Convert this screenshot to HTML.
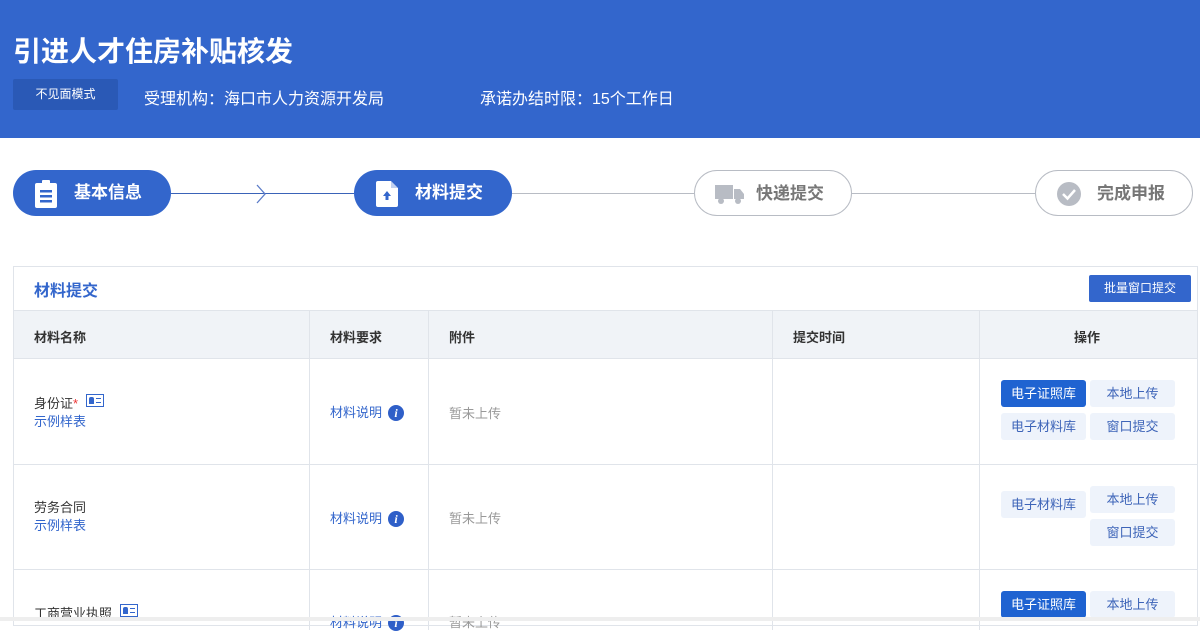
<!DOCTYPE html>
<html><head><meta charset="utf-8"><style>
*{margin:0;padding:0;box-sizing:border-box}
body{width:1200px;height:621px;overflow:hidden;background:#fff;font-family:"Liberation Sans","Noto Sans CJK SC",sans-serif;position:relative}
.hd{position:absolute;left:0;top:0;width:1200px;height:138px;background:#3366cc}
.hd h1{position:absolute;left:13px;top:30px;font-size:28px;color:#fff;font-weight:bold}
.badge{position:absolute;left:13px;top:79px;width:105px;height:31px;background:#2a59b6;color:#fff;font-size:12px;line-height:31px;text-align:center;border-radius:2px}
.hd .t{position:absolute;top:85px;font-size:16px;color:#fff}
.pill{position:absolute;top:170px;height:46px;width:158px;border-radius:23px;font-size:17px;font-weight:bold;line-height:46px}
.on{background:#3366cc;color:#fff}
.off{background:#fff;border:1px solid #b8bcc4;color:#777}
.pill span{position:absolute;left:61px}
.pill svg{position:absolute;left:20px;top:10px}
.ln{position:absolute;top:193px;height:1px}
.box{position:absolute;left:13px;top:266px;width:1185px;height:360px;border:1px solid #e0e4ea}
.ttl{position:absolute;left:20px;top:10px;font-size:16px;color:#3366cc;font-weight:bold}
.bb{position:absolute;right:6px;top:8px;width:102px;height:27px;background:#3366cc;color:#fff;font-size:12px;line-height:27px;text-align:center;border-radius:2px}
.th{position:absolute;left:0;top:43px;width:1183px;height:49px;background:#f0f3f7;border-top:1px solid #e0e4ea;border-bottom:1px solid #e0e4ea}
.c{position:absolute;font-size:13px}
.vl{position:absolute;top:43px;width:1px;height:320px;background:#e0e4ea}
.hl{position:absolute;left:0;width:1183px;height:1px;background:#e0e4ea}
.blue{color:#3366cc}
.btn{position:absolute;width:85px;height:27px;font-size:13px;line-height:27px;text-align:center;border-radius:3px;background:#eef3fb;color:#3d64b8}
.btn.p{background:#1f63d1;color:#fff}
.info{display:inline-block;width:16px;height:16px;border-radius:8px;background:#2f5fc8;color:#fff;font-size:12px;font-weight:bold;line-height:16px;text-align:center;font-family:"Liberation Serif",serif;font-style:italic;vertical-align:0px;margin-left:6px}
.idc{display:inline-block;width:18px;height:13px;border:1px solid #3366cc;vertical-align:1px;margin-left:8px;position:relative}
.idc:before{content:"";position:absolute;left:2px;top:2px;width:5px;height:7px;border-radius:2px 2px 0 0;background:#3366cc}
.idc:after{content:"";position:absolute;left:9px;top:3px;width:5px;height:3px;border-top:1px solid #3366cc;border-bottom:1px solid #3366cc}
.gray{color:#999}
</style></head><body>
<div class="hd">
<h1>引进人才住房补贴核发</h1>
<div class="badge">不见面模式</div>
<div class="t" style="left:144px">受理机构：海口市人力资源开发局</div>
<div class="t" style="left:480px">承诺办结时限：15个工作日</div>
</div>

<div class="ln" style="left:171px;width:183px;background:#3a63b8"></div>
<svg style="position:absolute;left:255px;top:184px" width="12" height="20"><path d="M2 1 L10 10 L2 19" fill="none" stroke="#5a7bc8" stroke-width="1.3"/></svg>
<div class="ln" style="left:511px;width:183px;background:#b8bcc4"></div>
<div class="ln" style="left:851px;width:184px;background:#b8bcc4"></div>

<div class="pill on" style="left:13px"><svg width="26" height="28"><rect x="2" y="3" width="22" height="25" rx="2" fill="#fff"/><rect x="9" y="0" width="8" height="5" rx="1" fill="#fff"/><rect x="7" y="10" width="12" height="2.5" fill="#3366cc"/><rect x="7" y="15" width="12" height="2.5" fill="#3366cc"/><rect x="7" y="20" width="12" height="2.5" fill="#3366cc"/></svg><span>基本信息</span></div>
<div class="pill on" style="left:354px"><svg width="26" height="28"><path d="M2 3 Q2 1 4 1 H17 L24 8 V25 Q24 27 22 27 H4 Q2 27 2 25 Z" fill="#fff"/><path d="M17 1 V8 H24" fill="#3366cc" opacity=".3"/><path d="M13 11 L17 16 H14.5 V20 H11.5 V16 H9 Z" fill="#3366cc"/></svg><span>材料提交</span></div>
<div class="pill off" style="left:694px"><svg width="30" height="26"><rect x="0" y="4" width="18" height="14" fill="#b8bcc4"/><path d="M19 8 H25 L29 13 V18 H19 Z" fill="#b8bcc4"/><circle cx="6" cy="20" r="3" fill="#b8bcc4"/><circle cx="23" cy="20" r="3" fill="#b8bcc4"/></svg><span>快递提交</span></div>
<div class="pill off" style="left:1035px"><svg width="26" height="26"><circle cx="13" cy="13" r="12" fill="#b8bcc4"/><path d="M7 13 L11.5 17.5 L19 9" fill="none" stroke="#fff" stroke-width="2.5"/></svg><span>完成申报</span></div>

<div class="box">
<div class="ttl">材料提交</div>
<div class="bb">批量窗口提交</div>
<div class="th"></div>
<div class="vl" style="left:295px"></div>
<div class="vl" style="left:414px"></div>
<div class="vl" style="left:758px"></div>
<div class="vl" style="left:965px"></div>
<div class="hl" style="top:197px"></div>
<div class="hl" style="top:302px"></div>
<div class="c" style="left:20px;top:60px;font-weight:bold;color:#333">材料名称</div>
<div class="c" style="left:316px;top:60px;font-weight:bold;color:#333">材料要求</div>
<div class="c" style="left:435px;top:60px;font-weight:bold;color:#333">附件</div>
<div class="c" style="left:779px;top:60px;font-weight:bold;color:#333">提交时间</div>
<div class="c" style="left:1060px;top:60px;font-weight:bold;color:#333">操作</div>

<div class="c" style="left:20px;top:127px;color:#333;line-height:18px">身份证<span style="color:#e33">*</span><span class="idc"></span><br><span class="blue">示例样表</span></div>
<div class="c blue" style="left:316px;top:135px">材料说明<span class="info">i</span></div>
<div class="c gray" style="left:435px;top:136px">暂未上传</div>
<div class="btn p" style="left:987px;top:113px">电子证照库</div>
<div class="btn" style="left:1076px;top:113px">本地上传</div>
<div class="btn" style="left:987px;top:146px">电子材料库</div>
<div class="btn" style="left:1076px;top:146px">窗口提交</div>

<div class="c" style="left:20px;top:232px;color:#333;line-height:18px">劳务合同<br><span class="blue">示例样表</span></div>
<div class="c blue" style="left:316px;top:241px">材料说明<span class="info">i</span></div>
<div class="c gray" style="left:435px;top:241px">暂未上传</div>
<div class="btn" style="left:987px;top:224px">电子材料库</div>
<div class="btn" style="left:1076px;top:219px">本地上传</div>
<div class="btn" style="left:1076px;top:252px">窗口提交</div>

<div class="c" style="left:20px;top:336px;color:#333">工商营业执照<span class="idc"></span></div>
<div class="c blue" style="left:316px;top:345px">材料说明<span class="info">i</span></div>
<div class="c gray" style="left:435px;top:345px">暂未上传</div>
<div class="btn p" style="left:987px;top:324px">电子证照库</div>
<div class="btn" style="left:1076px;top:324px">本地上传</div>
</div>
<div style="position:absolute;left:0;top:617px;width:1200px;height:4px;background:#eee"></div>
</body></html>
